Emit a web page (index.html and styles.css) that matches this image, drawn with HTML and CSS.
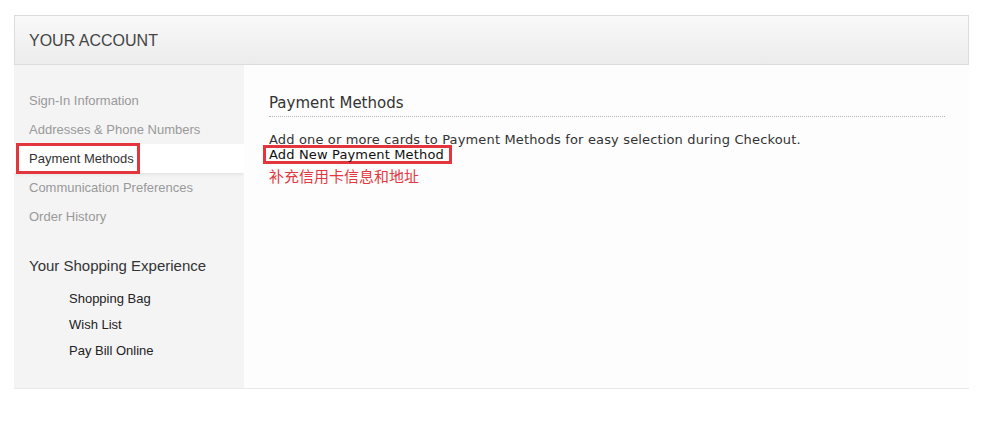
FILE: index.html
```html
<!DOCTYPE html>
<html lang="en">
<head>
  <meta charset="UTF-8" />
  <title>Your Account</title>
  <link rel="stylesheet" href="styles.css">
</head>
<body>
  <div class="account">
    <div class="account-header">YOUR ACCOUNT</div>

    <div class="account-body">
      <div class="sidebar">
        <ul class="account-nav">
          <li><a href="#">Sign-In Information</a></li>
          <li><a href="#">Addresses &amp; Phone Numbers</a></li>
          <li class="active"><a href="#"><span class="mark">Payment Methods</span></a></li>
          <li><a href="#">Communication Preferences</a></li>
          <li><a href="#">Order History</a></li>
        </ul>

        <h3 class="shop-title">Your Shopping Experience</h3>
        <ul class="shop-nav">
          <li><a href="#">Shopping Bag</a></li>
          <li><a href="#">Wish List</a></li>
          <li><a href="#">Pay Bill Online</a></li>
        </ul>
      </div>

      <div class="main">
        <h2 class="section-title">Payment Methods</h2>
        <p class="section-text">Add one or more cards to Payment Methods for easy selection during Checkout.</p>
        <div class="add-link"><a href="#" class="mark-box">Add New Payment Method</a></div>
        <p class="note">补充信用卡信息和地址</p>
      </div>
    </div>
  </div>
</body>
</html>
```

FILE: styles.css
```css
body {
  margin: 0;
  padding: 0;
  background-color: #fff;
  font-family: "Liberation Sans", Arial, sans-serif;
  color: #333;
}

a {
  text-decoration: none;
  color: inherit;
}

ul {
  list-style: none;
  margin: 0;
  padding: 0;
}

.account {
  width: 955px;
  margin: 15px 0 0 14px;
}

.account-header {
  height: 48px;
  line-height: 50px;
  padding-left: 14px;
  border: 1px solid #dcdcdc;
  background: linear-gradient(#f9f9f9, #ececec);
  font-size: 16px;
  color: #444;
}

.account-body {
  display: flex;
  border-bottom: 1px solid #e9e9e9;
}

/* left column */
.sidebar {
  width: 230px;
  padding: 21px 0 24px;
  background-color: #f4f4f5;
}

.account-nav li {
  height: 29px;
  line-height: 29px;
  padding-left: 15px;
  font-size: 13px;
  color: #999;
}

.account-nav li.active {
  background-color: #fff;
  color: #333;
  padding-left: 2px;
  box-shadow: 0 2px 3px rgba(0,0,0,0.06);
}

.mark {
  display: inline-block;
  line-height: 25px;
  margin-top: -1px;
  padding: 0 3px 0 10px;
  border: 3px solid #e2363c;
}

.shop-title {
  margin: 25px 0 10px;
  padding-left: 15px;
  font-size: 15px;
  font-weight: normal;
  line-height: 20px;
  color: #333;
}

.shop-nav li {
  height: 26px;
  line-height: 26px;
  padding-left: 55px;
  font-size: 13px;
  color: #222;
}

/* right column */
.main {
  flex: 1;
  padding: 28px 24px 0 25px;
  background-color: #fdfdfd;
  font-family: "DejaVu Sans", Verdana, sans-serif;
}

.section-title {
  margin: 0;
  padding-bottom: 3px;
  border-bottom: 1px dotted #b5b5b5;
  font-size: 15px;
  font-weight: normal;
  line-height: 20px;
  color: #333;
}

.section-text {
  margin: 15px 0 0;
  font-size: 13px;
  line-height: 16px;
  letter-spacing: 0.15px;
  color: #333;
}

.add-link {
  margin-top: -4px;
}

.mark-box {
  display: inline-block;
  margin-left: -6px;
  padding: 0 5px 0 3px;
  line-height: 13px;
  border: 3px solid #e2363c;
  font-size: 13px;
  letter-spacing: 0.15px;
  color: #111;
}

.note {
  margin: 2px 0 0;
  font-family: "Noto Sans CJK SC", sans-serif;
  font-size: 15px;
  line-height: 20px;
  color: #e2383f;
}
```
